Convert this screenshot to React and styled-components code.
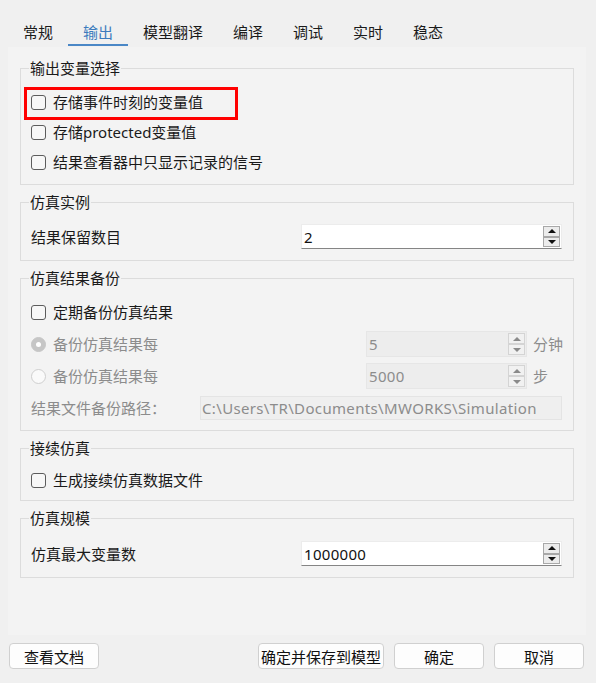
import React from "react"
import styled, { createGlobalStyle } from "styled-components"

const GlobalStyle = createGlobalStyle`
  html, body {
    margin: 0;
    padding: 0;
    background: #f0f0f0;
  }
  body {
    font-family: "Noto Sans", "Noto Sans CJK SC", sans-serif;
    font-size: 15px;
    color: #1a1a1a;
  }
`

export default function App() {
  return (
    <Window>
      <GlobalStyle />
      <TabBar>
        {["常规", "输出", "模型翻译", "编译", "调试", "实时", "稳态"].map((t) => (
          <Tab key={t} $active={t === "输出"}>{t}</Tab>
        ))}
      </TabBar>

      <Panel>
        <Group $pad="9px 11px 7px 10px">
          <Legend>输出变量选择</Legend>
          <Highlight>
            <Checkbox />
            <Label>存储事件时刻的变量值</Label>
          </Highlight>
          <Row $h={30}>
            <Checkbox />
            <Label>存储protected变量值</Label>
          </Row>
          <Row $h={30}>
            <Checkbox />
            <Label>结果查看器中只显示记录的信号</Label>
          </Row>
        </Group>

        <Group $pad="12px 11px 11px 10px">
          <Legend>仿真实例</Legend>
          <FieldRow $h={25}>
            <Label>结果保留数目</Label>
            <SpinBox value="2" width={261} height={25} />
          </FieldRow>
        </Group>

        <Group $pad="8px 11px 6px 10px">
          <Legend>仿真结果备份</Legend>
          <Row $h={32}>
            <Checkbox />
            <Label>定期备份仿真结果</Label>
          </Row>
          <UnitRow>
            <Row $h={32}>
              <Radio $checked />
              <Label $disabled>备份仿真结果每</Label>
            </Row>
            <SpinBox value="5" width={161} height={26} disabled />
            <Label $disabled>分钟</Label>
          </UnitRow>
          <UnitRow>
            <Row $h={32}>
              <Radio />
              <Label $disabled>备份仿真结果每</Label>
            </Row>
            <SpinBox value="5000" width={161} height={26} disabled />
            <Label $disabled>步</Label>
          </UnitRow>
          <PathRow>
            <Label $disabled>结果文件备份路径：</Label>
            <PathField>C:\Users\TR\Documents\MWORKS\Simulation</PathField>
          </PathRow>
        </Group>

        <Group $pad="7px 11px 5px 10px">
          <Legend>接续仿真</Legend>
          <Row $h={30}>
            <Checkbox />
            <Label>生成接续仿真数据文件</Label>
          </Row>
        </Group>

        <Group $pad="13px 11px 11px 10px">
          <Legend>仿真规模</Legend>
          <FieldRow $h={25}>
            <Label>仿真最大变量数</Label>
            <SpinBox value="1000000" width={261} height={25} />
          </FieldRow>
        </Group>
      </Panel>

      <ButtonBar>
        <Button $w={90}>查看文档</Button>
        <Spacer />
        <Button $w={126}>确定并保存到模型</Button>
        <Button $w={90}>确定</Button>
        <Button $w={90}>取消</Button>
      </ButtonBar>
    </Window>
  )
}

function SpinBox({ value, width, height, disabled }) {
  return (
    <SpinFrame style={{ width, height }} $disabled={disabled}>
      <SpinValue $disabled={disabled}>{value}</SpinValue>
      <SpinButtons>
        <SpinButton $disabled={disabled}><Arrow $up $disabled={disabled} /></SpinButton>
        <SpinButton $disabled={disabled}><Arrow $disabled={disabled} /></SpinButton>
      </SpinButtons>
    </SpinFrame>
  )
}

const Window = styled.div`
  width: 596px;
  height: 683px;
  display: flex;
  flex-direction: column;
  background: #f0f0f0;
`

const TabBar = styled.div`
  display: flex;
  margin-top: 20px;
  padding-left: 8px;
  height: 26px;
`

const Tab = styled.div`
  padding: 0 15px;
  line-height: 25px;
  color: ${(p) => (p.$active ? "#3c7bbd" : "#1a1a1a")};
  border-bottom: 2px solid ${(p) => (p.$active ? "#4a87c6" : "transparent")};
  box-sizing: border-box;
  height: 26px;
`

const Panel = styled.div`
  width: 578px;
  height: 588px;
  margin: 1px 0 0 8px;
  box-sizing: border-box;
  padding: 11px 12px 0;
  background: #f3f3f3;
  display: flex;
  flex-direction: column;
  gap: 7px;
`

const Group = styled.fieldset`
  margin: 0;
  min-width: 0;
  padding: ${(p) => p.$pad};
  border: 1px solid #dcdcdc;
  display: flex;
  flex-direction: column;
`

const Legend = styled.legend`
  padding: 0 1px;
  margin-left: -2px;
  line-height: 20px;
  height: 20px;
`

const Row = styled.div`
  display: flex;
  align-items: center;
  height: ${(p) => p.$h}px;
`

const Highlight = styled.div`
  display: flex;
  align-items: center;
  box-sizing: border-box;
  height: 33px;
  width: 214px;
  margin: 0 0 -3px -7px;
  padding: 0 0 3px 4px;
  border: 3px solid #ff0000;
  position: relative;
  z-index: 1;
`

const FieldRow = styled.div`
  display: grid;
  grid-template-columns: 270px 261px;
  align-items: center;
  height: ${(p) => p.$h}px;
`

const UnitRow = styled.div`
  display: grid;
  grid-template-columns: 329px 161px auto;
  column-gap: 6px;
  align-items: center;
  height: 32px;
`

const PathRow = styled.div`
  display: grid;
  grid-template-columns: 169px 362px;
  align-items: center;
  height: 32px;
`

const Label = styled.span`
  line-height: 20px;
  white-space: nowrap;
  color: ${(p) => (p.$disabled ? "#8c8c8c" : "#1a1a1a")};
`

const Checkbox = styled.span`
  width: 13px;
  height: 13px;
  border: 1px solid #5c5c5c;
  border-radius: 3px;
  background: #f7f7f7;
  margin-right: 7px;
  flex: none;
`

const Radio = styled.span`
  box-sizing: border-box;
  width: 15px;
  height: 15px;
  border-radius: 50%;
  margin-right: 7px;
  flex: none;
  display: flex;
  align-items: center;
  justify-content: center;
  background: ${(p) => (p.$checked ? "#c6c6c6" : "#fafafa")};
  border: 1px solid ${(p) => (p.$checked ? "#c6c6c6" : "#cfcfcf")};
  &::after {
    content: "";
    display: ${(p) => (p.$checked ? "block" : "none")};
    width: 5px;
    height: 5px;
    border-radius: 50%;
    background: #ffffff;
  }
`

const SpinFrame = styled.div`
  box-sizing: border-box;
  display: flex;
  align-items: stretch;
  background: ${(p) => (p.$disabled ? "#ededed" : "#ffffff")};
  border: 1px solid ${(p) => (p.$disabled ? "#e6e6e6" : "#ececec")};
  border-bottom-color: ${(p) => (p.$disabled ? "#e6e6e6" : "#858585")};
`

const SpinValue = styled.div`
  flex: 1;
  display: flex;
  align-items: center;
  padding-left: 2px;
  letter-spacing: 0.3px;
  color: ${(p) => (p.$disabled ? "#8c8c8c" : "#111111")};
`

const SpinButtons = styled.div`
  display: flex;
  flex-direction: column;
  width: 17px;
  margin: 1px 1px 1px 0;
`

const SpinButton = styled.div`
  flex: 1;
  box-sizing: border-box;
  border: 1px solid ${(p) => (p.$disabled ? "#d4d4d4" : "#a8a8a8")};
  background: ${(p) => (p.$disabled ? "#f1f1f1" : "#ececec")};
  display: flex;
  align-items: center;
  justify-content: center;
`

const Arrow = styled.span`
  width: 0;
  height: 0;
  border-left: 4px solid transparent;
  border-right: 4px solid transparent;
  ${(p) => (p.$up ? "border-bottom" : "border-top")}: 4px solid ${(p) => (p.$disabled ? "#8a8a8a" : "#111111")};
`

const PathField = styled.div`
  box-sizing: border-box;
  height: 24px;
  display: flex;
  align-items: center;
  padding-left: 1px;
  background: #efefef;
  border: 1px solid #e4e4e4;
  color: #8c8c8c;
  letter-spacing: 0.35px;
  white-space: nowrap;
  overflow: hidden;
`

const ButtonBar = styled.div`
  display: flex;
  gap: 10px;
  margin-top: 8px;
  padding: 0 12px 0 9px;
`

const Spacer = styled.div`
  flex: 1;
`

const Button = styled.button`
  width: ${(p) => p.$w}px;
  height: 26px;
  padding: 0;
  background: #fdfdfd;
  border: 1px solid #d0d0d0;
  border-radius: 4px;
  font-family: inherit;
  font-size: 15px;
  color: #111111;
  white-space: nowrap;
`
